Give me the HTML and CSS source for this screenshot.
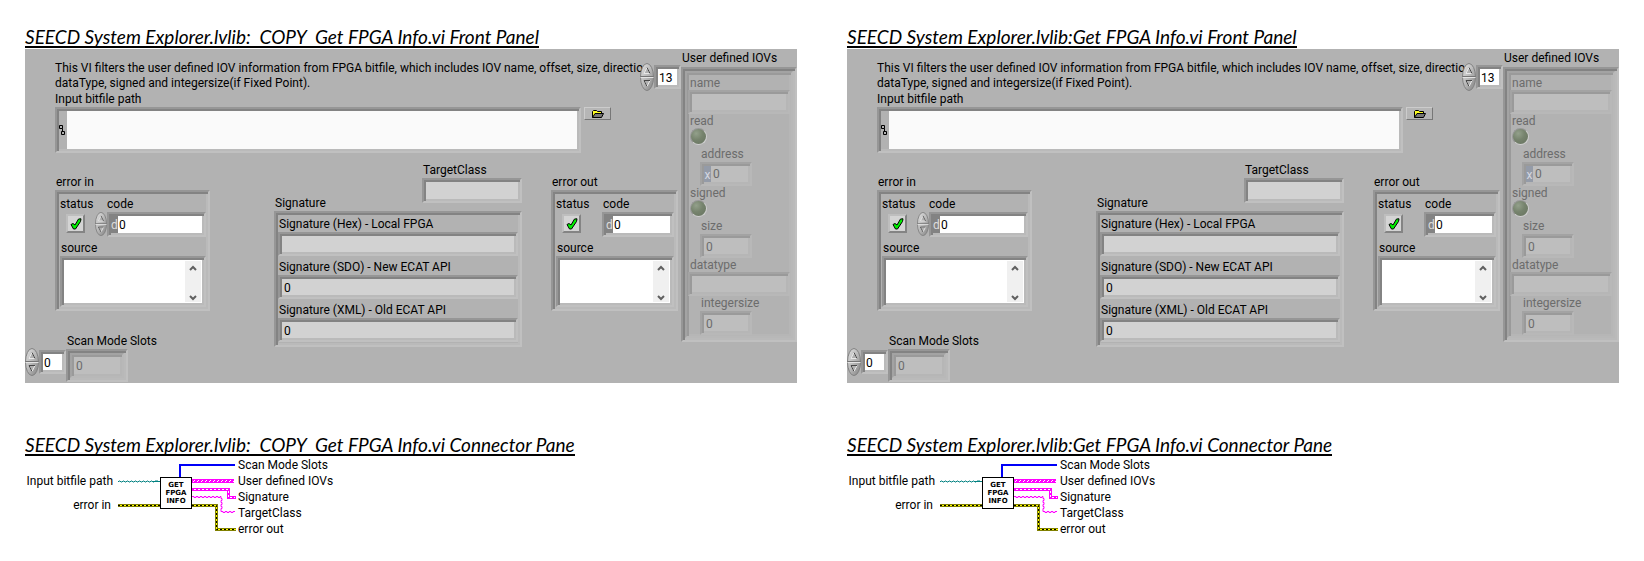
FILE: index.html
```html
<!DOCTYPE html>
<html lang="en">
<head>
<meta charset="utf-8">
<title>Get FPGA Info.vi</title>
<link rel="stylesheet" href="styles.css">
</head>
<body>
<svg class="sprite" aria-hidden="true">
  <linearGradient id="metal" x1="0" y1="0" x2="1" y2="1"><stop offset="0" stop-color="#e2e2e2"/><stop offset=".5" stop-color="#b8b8b8"/><stop offset="1" stop-color="#808080"/></linearGradient>
  <symbol id="spin" viewBox="0 0 14 28">
    <ellipse cx="7" cy="14" rx="6.5" ry="13.5" fill="url(#metal)" stroke="#808080"/>
    <path d="M.5 13.500H13.500" stroke="#757575"/><path d="M.5 14.500H13.500" stroke="#e4e4e4"/>
    <path d="M4 10.500L7 4.500L10 10.500Z" fill="#b0b0b0" stroke="#e8e8e8"/><path d="M7 4.500L10 10.500" stroke="#484848"/>
    <path d="M10 17.500L7 23.500L4 17.500Z" fill="#b0b0b0" stroke="#e8e8e8"/><path d="M7 23.500L4 17.500H10" fill="none" stroke="#484848"/>
  </symbol>
  <symbol id="tick" viewBox="0 0 12 12">
    <path d="M1 6.500L3 5.500L5 7L8.500 1L11 0.800L10.500 3.500L5.500 11H3.500Z" fill="#00f000" stroke="#000" stroke-width="1"/>
  </symbol>
  <symbol id="path" viewBox="0 0 6 10">
    <path d="M.5.5h3v3h-3zM2.500 6.500h3v3h-3zM3.500 3.500v3" fill="none" stroke="#000"/>
  </symbol>
  <symbol id="folder" viewBox="0 0 12 8">
    <path d="M.5 7.500V1.500L1.500.5H4.500L5.500 1.500H9.500V3.500" fill="#ffff20" stroke="#000"/>
    <path d="M.5 7.500L3 3.500H11.500L9.500 7.500Z" fill="#777" stroke="#000"/>
  </symbol>
  <symbol id="up" viewBox="0 0 8 6"><path d="M1 5L4 2L7 5" fill="none" stroke="#606060" stroke-width="2"/></symbol>
  <symbol id="down" viewBox="0 0 8 6"><path d="M1 1L4 4L7 1" fill="none" stroke="#606060" stroke-width="2"/></symbol>
  <symbol id="wires" viewBox="0 0 123 84">
    <path d="M5 25l1-1h1l1 1h1l1-1h1l1 1h1l1-1h1l1 1h1l1-1h1l1 1h1l1-1h1l1 1h1l1-1h1l1 1h1l1-1h1l1 1h1l1-1h1l1 1h1l1-1h1l1 1h1l1-1h3" fill="none" stroke="#008080"/>
    <path d="M5 48.500H47M79 48.500H103.500V72.500H123" fill="none" stroke="#808000" stroke-width="3"/>
    <path d="M5 48.500H47M79 48.500H103.500V72.500H123" fill="none" stroke="#ffff00"/>
    <path d="M5 48.500H47M79 48.500H103.500V72.500H123" fill="none" stroke="#000" stroke-dasharray="2 2"/>
    <path d="M40 24.500H47" stroke="#008080"/>
    <path d="M67 20V8H122" fill="none" stroke="#0000f8" stroke-width="2"/>
    <path d="M79 24H121" stroke="#ff00ff" stroke-width="4"/>
    <path d="M80 25l2-2m2 2l2-2m2 2l2-2m2 2l2-2m2 2l2-2m2 2l2-2m2 2l2-2m2 2l2-2m2 2l2-2m2 2l2-2m2 2l2-2" stroke="#fff"/>
    <path d="M79 32.500H115.500V40.500H123" fill="none" stroke="#ff00ff" stroke-width="3"/>
    <path d="M81 32.500H115.500V40.500H122" fill="none" stroke="#fff" stroke-dasharray="2 2"/>
    <path d="M79 39.500h2v1h2v-1h2v1h2v-1h2v1h2v-1h2v1h2v-1h2v1h2v-1h2v1h2v-1h2v1h2v-1h1v2h1v2h-1v2h1v2h-1v2h1v2h-1v3h2v1h2v-1h2v1h2v-1h2v1h2v-1h2" fill="none" stroke="#ff00ff"/>
  </symbol>
</svg>

<main class="report">
  <section class="vi">
    <h2 class="title">SEECD System Explorer.lvlib:  COPY  Get FPGA Info.vi Front Panel</h2>
    <div class="panel">
      <div class="body">
        <div class="intro">
          <p class="about">This VI filters the user defined IOV information from FPGA bitfile, which includes IOV name, offset, size, direction<br>dataType, signed and integersize(if Fixed Point).</p>
          <div class="index"><svg class="spin"><use href="#spin"/></svg><input class="sunk num" aria-label="IOV index" value="13"></div>
        </div>
        <label class="path-field">Input bitfile path
          <span class="path-row"><span class="sunk path-box"><svg class="path-icon"><use href="#path"/></svg><input class="plain path-input" aria-label="Input bitfile path"></span><button class="browse" type="button" aria-label="Browse"><svg class="folder"><use href="#folder"/></svg></button></span>
        </label>
        <div class="clusters">
          <div class="left">
            <div class="group error-in">
              <span>error in</span>
              <div class="sunk error">
                <div class="error-top">
                  <label class="status">status<span class="check"><input type="checkbox" checked><svg><use href="#tick"/></svg></span></label>
                  <label class="code">code<span class="code-row"><svg class="spin small"><use href="#spin"/></svg><span class="sunk radix-box"><span class="radix">d</span><input class="plain" value="0"></span></span></label>
                </div>
                <label class="source">source<span class="sunk text-box"><textarea class="plain"></textarea><span class="scroll"><svg><use href="#up"/></svg><svg><use href="#down"/></svg></span></span></label>
              </div>
            </div>
            <div class="slots">
              <div class="index"><svg class="spin"><use href="#spin"/></svg><input class="sunk num" aria-label="Slot index" value="0"></div>
              <label class="slot-field">Scan Mode Slots<span class="sunk slot-box"><input class="sunk faded" value="0" disabled></span></label>
            </div>
          </div>
          <div class="middle">
            <span class="sig-label">Signature</span>
            <label class="target">TargetClass<input class="sunk readout" readonly></label>
            <div class="sunk signatures">
              <label>Signature (Hex) - Local FPGA<input class="sunk readout" readonly></label>
              <label>Signature (SDO) - New ECAT API<input class="sunk readout" value="0" readonly></label>
              <label>Signature (XML) - Old ECAT API<input class="sunk readout" value="0" readonly></label>
            </div>
          </div>
          <div class="group error-out">
            <span>error out</span>
            <div class="sunk error">
              <div class="error-top">
                <label class="status">status<span class="check"><input type="checkbox" checked><svg><use href="#tick"/></svg></span></label>
                <label class="code">code<span class="code-row"><span class="sunk radix-box"><span class="radix">d</span><input class="plain" value="0" readonly></span></span></label>
              </div>
              <label class="source">source<span class="sunk text-box"><textarea class="plain" readonly></textarea><span class="scroll"><svg><use href="#up"/></svg><svg><use href="#down"/></svg></span></span></label>
            </div>
          </div>
        </div>
      </div>
      <div class="iovs">
        <span>User defined IOVs</span>
        <div class="sunk">
          <div class="iov faded">
            <label>name<input class="sunk faded" disabled></label>
            <label class="led">read<input type="checkbox" disabled></label>
            <label class="short">address<span class="sunk faded radix-box"><span class="radix hex">x</span><input class="plain" value="0" disabled></span></label>
            <label class="led">signed<input type="checkbox" disabled></label>
            <label class="short">size<input class="sunk faded" value="0" disabled></label>
            <label>datatype<input class="sunk faded" disabled></label>
            <label class="short">integersize<input class="sunk faded" value="0" disabled></label>
          </div>
        </div>
      </div>
    </div>
    <h2 class="title">SEECD System Explorer.lvlib:  COPY  Get FPGA Info.vi Connector Pane</h2>
    <div class="connector">
      <ul class="inputs"><li>Input bitfile path</li><li>error in</li></ul>
      <div class="wiring"><svg class="wires"><use href="#wires"/></svg><div class="icon">GET<br>FPGA<br>INFO</div></div>
      <ul class="outputs"><li>Scan Mode Slots</li><li>User defined IOVs</li><li>Signature</li><li>TargetClass</li><li>error out</li></ul>
    </div>
  </section>

  <section class="vi">
    <h2 class="title">SEECD System Explorer.lvlib:Get FPGA Info.vi Front Panel</h2>
    <div class="panel">
      <div class="body">
        <div class="intro">
          <p class="about">This VI filters the user defined IOV information from FPGA bitfile, which includes IOV name, offset, size, direction<br>dataType, signed and integersize(if Fixed Point).</p>
          <div class="index"><svg class="spin"><use href="#spin"/></svg><input class="sunk num" aria-label="IOV index" value="13"></div>
        </div>
        <label class="path-field">Input bitfile path
          <span class="path-row"><span class="sunk path-box"><svg class="path-icon"><use href="#path"/></svg><input class="plain path-input" aria-label="Input bitfile path"></span><button class="browse" type="button" aria-label="Browse"><svg class="folder"><use href="#folder"/></svg></button></span>
        </label>
        <div class="clusters">
          <div class="left">
            <div class="group error-in">
              <span>error in</span>
              <div class="sunk error">
                <div class="error-top">
                  <label class="status">status<span class="check"><input type="checkbox" checked><svg><use href="#tick"/></svg></span></label>
                  <label class="code">code<span class="code-row"><svg class="spin small"><use href="#spin"/></svg><span class="sunk radix-box"><span class="radix">d</span><input class="plain" value="0"></span></span></label>
                </div>
                <label class="source">source<span class="sunk text-box"><textarea class="plain"></textarea><span class="scroll"><svg><use href="#up"/></svg><svg><use href="#down"/></svg></span></span></label>
              </div>
            </div>
            <div class="slots">
              <div class="index"><svg class="spin"><use href="#spin"/></svg><input class="sunk num" aria-label="Slot index" value="0"></div>
              <label class="slot-field">Scan Mode Slots<span class="sunk slot-box"><input class="sunk faded" value="0" disabled></span></label>
            </div>
          </div>
          <div class="middle">
            <span class="sig-label">Signature</span>
            <label class="target">TargetClass<input class="sunk readout" readonly></label>
            <div class="sunk signatures">
              <label>Signature (Hex) - Local FPGA<input class="sunk readout" readonly></label>
              <label>Signature (SDO) - New ECAT API<input class="sunk readout" value="0" readonly></label>
              <label>Signature (XML) - Old ECAT API<input class="sunk readout" value="0" readonly></label>
            </div>
          </div>
          <div class="group error-out">
            <span>error out</span>
            <div class="sunk error">
              <div class="error-top">
                <label class="status">status<span class="check"><input type="checkbox" checked><svg><use href="#tick"/></svg></span></label>
                <label class="code">code<span class="code-row"><span class="sunk radix-box"><span class="radix">d</span><input class="plain" value="0" readonly></span></span></label>
              </div>
              <label class="source">source<span class="sunk text-box"><textarea class="plain" readonly></textarea><span class="scroll"><svg><use href="#up"/></svg><svg><use href="#down"/></svg></span></span></label>
            </div>
          </div>
        </div>
      </div>
      <div class="iovs">
        <span>User defined IOVs</span>
        <div class="sunk">
          <div class="iov faded">
            <label>name<input class="sunk faded" disabled></label>
            <label class="led">read<input type="checkbox" disabled></label>
            <label class="short">address<span class="sunk faded radix-box"><span class="radix hex">x</span><input class="plain" value="0" disabled></span></label>
            <label class="led">signed<input type="checkbox" disabled></label>
            <label class="short">size<input class="sunk faded" value="0" disabled></label>
            <label>datatype<input class="sunk faded" disabled></label>
            <label class="short">integersize<input class="sunk faded" value="0" disabled></label>
          </div>
        </div>
      </div>
    </div>
    <h2 class="title">SEECD System Explorer.lvlib:Get FPGA Info.vi Connector Pane</h2>
    <div class="connector">
      <ul class="inputs"><li>Input bitfile path</li><li>error in</li></ul>
      <div class="wiring"><svg class="wires"><use href="#wires"/></svg><div class="icon">GET<br>FPGA<br>INFO</div></div>
      <ul class="outputs"><li>Scan Mode Slots</li><li>User defined IOVs</li><li>Signature</li><li>TargetClass</li><li>error out</li></ul>
    </div>
  </section>
</main>
</body>
</html>
```
FILE: styles.css
```css
* { box-sizing: border-box; }

body {
  margin: 0;
  background: #fff;
  color: #000;
  font: 12px/16px Roboto, "Noto Sans", sans-serif;
}

.sprite { position: absolute; width: 0; height: 0; }
svg { display: block; flex: none; }
label { display: flex; flex-direction: column; }
ul { margin: 0; padding: 0; list-style: none; }

input, textarea, button {
  margin: 0;
  font: inherit;
  color: inherit;
  border-radius: 0;
  min-width: 0;
}

.report { display: grid; grid-template-columns: 1fr 1fr; }
.vi { padding: 26px 25px 16px; }

.title {
  width: max-content;
  margin: 0 0 1px;
  padding-top: 1px;
  border-bottom: 2px solid #000;
  font: italic 19px/19px Lato, sans-serif;
  white-space: pre;
}

/* Bevelled frames */
.sunk {
  border: 2px solid;
  border-color: #969696 #c0c0c0 #c0c0c0 #969696;
  box-shadow: inset 2px 2px #838383, inset -2px -2px #bababa;
  padding: 2px;
}
.faded {
  border-color: #a3a3a3 #b8b8b8 #b8b8b8 #a3a3a3;
  box-shadow: inset 2px 2px #9a9a9a, inset -2px -2px #b6b6b6;
  color: #6c6c6c;
}
input.sunk { height: 24px; padding: 3px 4px 2px; outline: none; }
input.faded { background: #bebebe; }
.plain { border: 0; padding: 0 1px; background: #fff; outline: none; resize: none; }
.readout { width: 100%; background: #d2d2d2; }

.panel { display: flex; background: #b2b2b2; margin-bottom: 51px; }
.body { flex: 1; min-width: 0; }

.intro { display: flex; padding-top: 12px; }
.about {
  flex: 1;
  width: 0;
  margin: 0 0 0 30px;
  line-height: 15px;
  white-space: nowrap;
}
.index { display: flex; align-items: center; }
.intro .index { height: 34px; margin: -1px 0 -4px; }
.spin { width: 14px; height: 28px; }
.spin.small { width: 12px; height: 24px; }
.index .num { width: 27px; padding: 3px 3px 2px; background: #fff; }

.path-field { padding-left: 30px; }
.path-row { display: flex; gap: 3px; padding-right: 70px; }
.path-box { flex: 1; display: flex; align-items: center; height: 46px; }
.path-icon { width: 6px; height: 10px; margin: 0 2px 0 0; }
.path-input { flex: 1; align-self: stretch; background: #fafafa; }
.browse {
  display: grid;
  place-items: center;
  width: 27px;
  height: 13px;
  padding: 0;
  border: 1px solid;
  border-color: #ccc #777 #777 #ccc;
  background: #b6b6b6;
}
.folder { width: 12px; height: 8px; }

.clusters { display: flex; padding: 9px 3px 0 0; }
.left { flex: none; width: 249px; }
.group { padding: 12px 0 0; }
.group > span { padding-left: 1px; }
.error-in { width: 185px; padding-left: 30px; }
.error-out { width: 127px; margin-left: auto; }
.error { padding-top: 4px; }
.error-top { display: flex; }
.status { width: 36px; text-indent: 1px; }
.check { display: grid; margin: 2px 0 0 7px; width: 19px; }
.check input, .check svg { grid-area: 1 / 1; }
.check input {
  appearance: none;
  width: 19px;
  height: 19px;
  border: 2px solid;
  border-color: #bebebe #848484 #848484 #bebebe;
  background: #d4d4d4;
}
.check svg { width: 12px; height: 12px; place-self: center; pointer-events: none; }
.code { flex: 1; padding-left: 11px; text-indent: 1px; }
.error-in .code { text-indent: 12px; padding-left: 0; }
.error .code-row { display: flex; text-indent: 0; }
.radix-box { display: flex; flex: 1; height: 25px; background: #fff; }
.radix-box .plain { flex: 1; width: 0; background: transparent; }
.radix { width: 7px; background: #838383; color: #ddd; line-height: 18px; text-align: center; }
.radix.hex { background: #949ba8; color: #d4d8e0; }
.source { margin-left: 1px; padding-top: 3px; text-indent: 1px; }
.text-box { display: flex; height: 51px; background: #fff; }
.text-box textarea { flex: 1; width: 0; }
.scroll {
  display: flex;
  flex-direction: column;
  justify-content: space-between;
  align-items: center;
  width: 16px;
  margin: 1px;
  padding: 4px 0 1px;
  background: #f0f0f0;
}
.scroll svg { width: 8px; height: 6px; }

.slots { display: flex; align-items: flex-end; padding: 22px 0 1px; }
.slots .index { margin-bottom: 6px; }
.slot-field { text-indent: 1px; }
.slot-box { width: 62px; height: 33px; }
.slot-box input { display: block; width: 100%; height: 25px; }

.middle {
  display: grid;
  grid-template-columns: 1fr 100px;
  align-content: start;
  width: 248px;
}
.sig-label { align-self: end; padding-left: 1px; }
.target { padding-bottom: 8px; text-indent: 1px; }
.target input { height: 25px; }
.signatures { grid-column: 1 / -1; display: grid; gap: 3px; padding: 3px 2px 3px; }
.signatures label { text-indent: 1px; }

.iovs { width: 116px; padding-bottom: 40px; }
.iovs > span { display: block; padding: 1px 0 0 1px; }
.iovs > .sunk { margin-top: 1px; }
.iov { border-width: 2px; border-style: solid; padding: 3px 1px 1px; line-height: 14px; }
.iov label { text-indent: 2px; }
.iov input, .iov .radix-box { text-indent: 0; width: 100%; }
.iov .radix-box { flex: none; height: 24px; background: #bebebe; }
.iov .radix-box .plain { padding-left: 2px; }
.iov .short { width: 64px; padding-left: 12px; gap: 1px; text-indent: 1px; }
.led input {
  appearance: none;
  width: 17px;
  height: 17px;
  margin: 0 0 2px 2px;
  border: 1px solid;
  border-color: #989898 #d0d0d0 #d0d0d0 #989898;
  border-radius: 50%;
  background: radial-gradient(circle at 35% 30%, #93a08b, #76836d 45%, #66725f);
}
.iov .led input { width: 17px; }

.connector { display: flex; }
.inputs {
  display: grid;
  align-content: start;
  gap: 8px;
  width: 88px;
  padding-top: 16px;
  text-align: right;
  white-space: nowrap;
}
.inputs li:last-child { padding-right: 2px; }
.wiring { display: grid; }
.wires, .icon { grid-area: 1 / 1; }
.wires { width: 123px; height: 84px; }
.icon {
  width: 32px;
  height: 32px;
  margin: 20px 0 0 47px;
  padding-top: 3px;
  border: 1px solid #000;
  background: #fff;
  font: bold 7px/8px "DejaVu Sans", sans-serif;
  text-align: center;
}
.outputs { padding-left: 2px; }
```
